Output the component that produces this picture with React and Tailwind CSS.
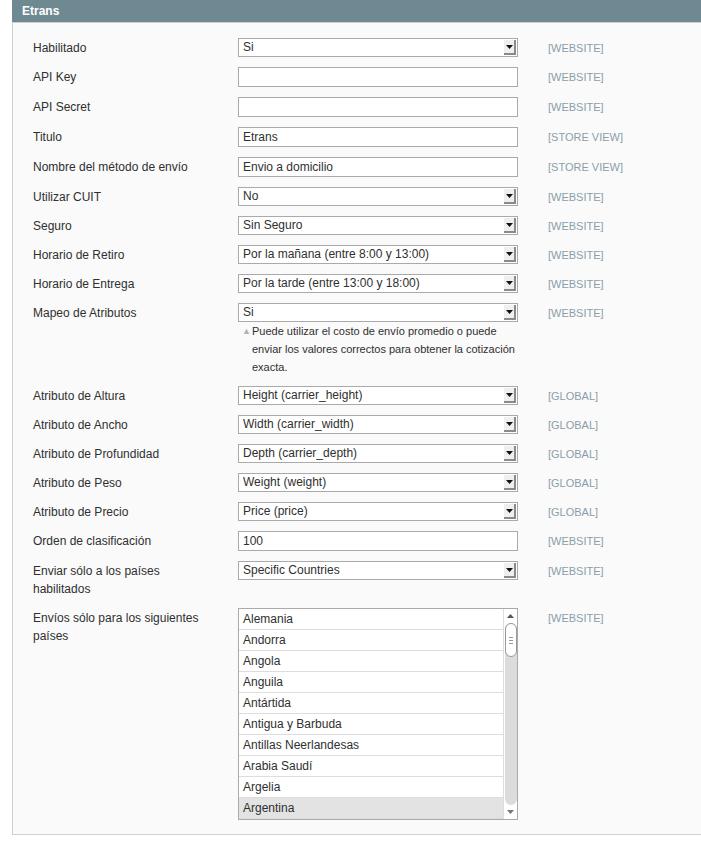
import React from 'react';

const rows = [
  { label: 'Habilitado', type: 'select', value: 'Si', scope: '[WEBSITE]' },
  { label: 'API Key', type: 'text', value: '', scope: '[WEBSITE]' },
  { label: 'API Secret', type: 'text', value: '', scope: '[WEBSITE]' },
  { label: 'Titulo', type: 'text', value: 'Etrans', scope: '[STORE VIEW]' },
  { label: 'Nombre del método de envío', type: 'text', value: 'Envio a domicilio', scope: '[STORE VIEW]' },
  { label: 'Utilizar CUIT', type: 'select', value: 'No', scope: '[WEBSITE]' },
  { label: 'Seguro', type: 'select', value: 'Sin Seguro', scope: '[WEBSITE]' },
  { label: 'Horario de Retiro', type: 'select', value: 'Por la mañana (entre 8:00 y 13:00)', scope: '[WEBSITE]' },
  { label: 'Horario de Entrega', type: 'select', value: 'Por la tarde (entre 13:00 y 18:00)', scope: '[WEBSITE]' },
  {
    label: 'Mapeo de Atributos',
    type: 'select',
    value: 'Si',
    scope: '[WEBSITE]',
    note: 'Puede utilizar el costo de envío promedio o puede enviar los valores correctos para obtener la cotización exacta.',
  },
  { label: 'Atributo de Altura', type: 'select', value: 'Height (carrier_height)', scope: '[GLOBAL]' },
  { label: 'Atributo de Ancho', type: 'select', value: 'Width (carrier_width)', scope: '[GLOBAL]' },
  { label: 'Atributo de Profundidad', type: 'select', value: 'Depth (carrier_depth)', scope: '[GLOBAL]' },
  { label: 'Atributo de Peso', type: 'select', value: 'Weight (weight)', scope: '[GLOBAL]' },
  { label: 'Atributo de Precio', type: 'select', value: 'Price (price)', scope: '[GLOBAL]' },
  { label: 'Orden de clasificación', type: 'text', value: '100', scope: '[WEBSITE]' },
  { label: 'Enviar sólo a los países habilitados', type: 'select', value: 'Specific Countries', scope: '[WEBSITE]' },
  { label: 'Envíos sólo para los siguientes países', type: 'multi', scope: '[WEBSITE]' },
];

const countries = [
  'Alemania',
  'Andorra',
  'Angola',
  'Anguila',
  'Antártida',
  'Antigua y Barbuda',
  'Antillas Neerlandesas',
  'Arabia Saudí',
  'Argelia',
  'Argentina',
];

function SelectBox({ value }) {
  return (
    <div className="flex h-[19px] w-[280px] items-center border border-[#aaa] bg-white pl-[4px] pr-[1px]">
      <span className="flex-1 truncate leading-[17px] text-[#2f2f2f]">{value}</span>
      <span className="flex h-[15px] w-[12px] items-center justify-center border-r-2 border-b-2 border-[#8a8a8a] bg-[#efefef]">
        <svg width="7" height="4" viewBox="0 0 7 4">
          <path d="M0 0h7L3.5 4z" fill="#111" />
        </svg>
      </span>
    </div>
  );
}

function TextBox({ value }) {
  return (
    <div className="flex h-[20px] w-[280px] items-center border border-[#aaa] bg-white px-[4px]">
      <span className="leading-[18px] text-[#2f2f2f]">{value}</span>
    </div>
  );
}

function MultiBox() {
  return (
    <div className="flex h-[212px] w-[280px] border border-[#aaa] bg-white">
      <div className="flex-1">
        {countries.map((c, i) => (
          <div
            key={c}
            className={
              'h-[21px] border-b border-[#ddd] pl-[4px] leading-[20px] text-[#2f2f2f] ' +
              (i === countries.length - 1 ? 'bg-[#e3e3e3]' : '')
            }
          >
            {c}
          </div>
        ))}
      </div>
      <div className="flex w-[14px] flex-col items-center border-l border-[#ddd] bg-white">
        <div className="flex h-[14px] w-full items-center justify-center">
          <svg width="7" height="4" viewBox="0 0 7 4">
            <path d="M3.5 0L7 4H0z" fill="#555" />
          </svg>
        </div>
        <div className="flex w-[12px] flex-1 flex-col rounded-[6px] bg-[#dcdcdc]">
          <div className="flex h-[34px] w-[12px] flex-col items-center justify-center gap-[2px] rounded-[6px] border border-[#999] bg-white">
            <span className="h-px w-[4px] bg-[#999]" />
            <span className="h-px w-[4px] bg-[#999]" />
            <span className="h-px w-[4px] bg-[#999]" />
          </div>
        </div>
        <div className="flex h-[14px] w-full items-center justify-center">
          <svg width="7" height="4" viewBox="0 0 7 4">
            <path d="M0 0h7L3.5 4z" fill="#777" />
          </svg>
        </div>
      </div>
    </div>
  );
}

export default function App() {
  return (
    <div className="min-h-[842px] bg-white pl-[12px] text-[12px]" style={{ fontFamily: '"Liberation Sans", Arial, sans-serif' }}>
      <div className="flex h-[22px] items-center bg-[#6f8992] pl-[10px] font-bold text-white">Etrans</div>
      <div className="border-t border-l border-b border-[#d0d0d0] bg-[#fafafa] pt-[10px] pb-[9px] pl-[20px]">
        {rows.map((r) => (
          <div key={r.label} className="flex items-start py-[5px]">
            <div className="w-[205px] pr-[25px] pt-[1px] leading-[18px] text-[#2f2f2f]">{r.label}</div>
            <div className="w-[280px]">
              {r.type === 'select' && <SelectBox value={r.value} />}
              {r.type === 'text' && <TextBox value={r.value} />}
              {r.type === 'multi' && <MultiBox />}
              {r.note && (
                <div className="flex pl-[4px] text-[11px] leading-[18px] text-[#2f2f2f]">
                  <span className="w-[10px] shrink-0 text-[9px] text-[#aab4b8]">▲</span>
                  <span>{r.note}</span>
                </div>
              )}
            </div>
            <div className="pl-[30px] pt-[1px] text-[11px] leading-[18px] text-[#8a9eaa]">{r.scope}</div>
          </div>
        ))}
      </div>
    </div>
  );
}
